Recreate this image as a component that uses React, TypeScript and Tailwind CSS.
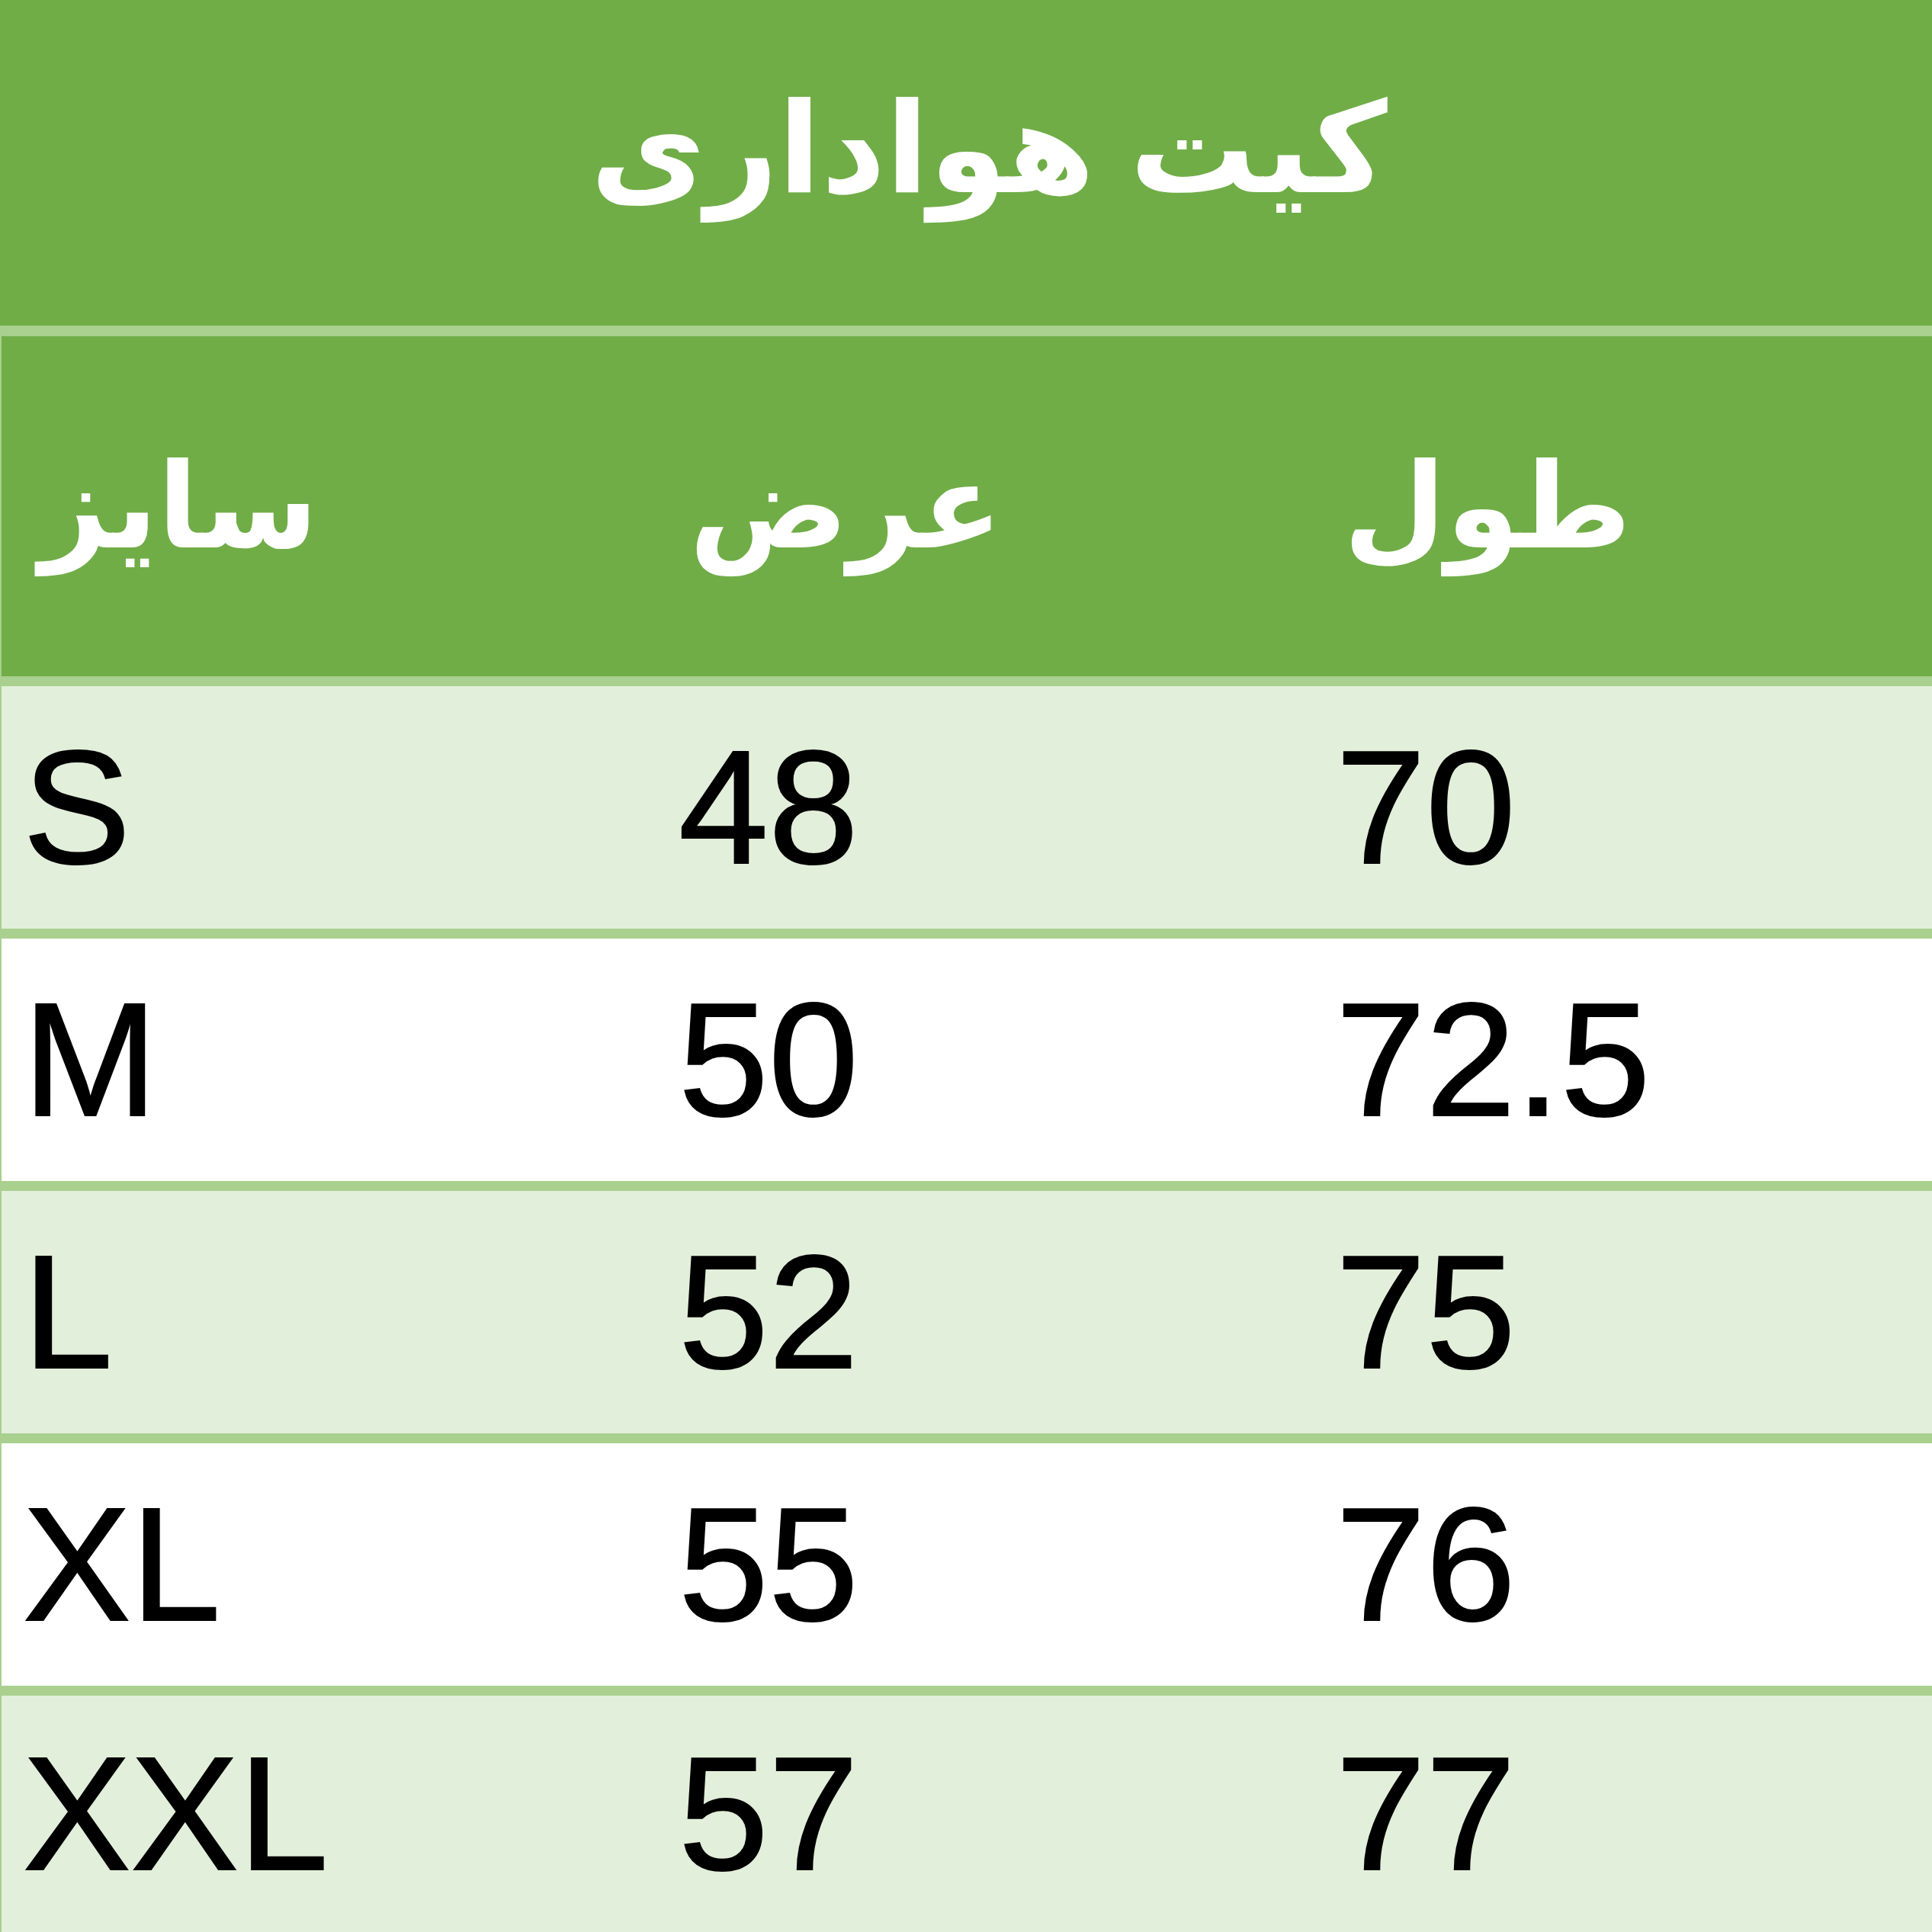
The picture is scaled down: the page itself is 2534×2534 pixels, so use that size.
import React from "react";

const rows = [
    { size: "S", width: "48", length: "70" },
    { size: "M", width: "50", length: "72.5" },
    { size: "L", width: "52", length: "75" },
    { size: "XL", width: "55", length: "76" },
    { size: "XXL", width: "57", length: "77" },
];

// فونت عربی برای عنوان‌ها
const AR = "font-['Liberation_Sans','DejaVu_Sans',sans-serif] font-bold";

export default function App(): React.ReactElement {
    return (
        <div className="w-[2534px] h-[2534px] overflow-hidden bg-white font-['Liberation_Sans',sans-serif]">
            {/* title */}
            <div className="h-[441px] bg-[#70ad47] border-b-[14px] border-[#a9d08e] flex items-center justify-center pl-[60px] pb-[36px]">
                <h1 dir="rtl" className={`${AR} text-white text-[165px] leading-none`}>
                    کیت هواداری
                </h1>
            </div>

            {/* header */}
            <div className={`${AR} h-[459px] bg-[#70ad47] border-b-[13px] border-l-2 border-[#a9d08e] grid grid-cols-[860px_862px_1fr] items-center px-[28px] text-white text-[155px] leading-none`}>
                <div>
                    <span dir="rtl" className="pl-[22px]">سایز</span>
                </div>
                <div>
                    <span dir="rtl" className="pl-[14px]">عرض</span>
                </div>
                <div>
                    <span dir="rtl" className="pl-[10px]">طول</span>
                </div>
            </div>

            {/* rows */}
            {rows.map((row, i) => (
                <div
                    key={row.size}
                    className={`${i % 2 === 0 ? "bg-[#e2efda]" : "bg-white"} ${
                        i < rows.length - 1 ? "h-[331px] border-b-[13px]" : "h-[310px]"
                    } border-l-2 border-[#a9d08e] grid grid-cols-[860px_862px_1fr] items-center px-[28px] text-black text-[212px] leading-none [-webkit-text-stroke:2px_black]`}
                >
                    <div>{row.size}</div>
                    <div>{row.width}</div>
                    <div>{row.length}</div>
                </div>
            ))}
        </div>
    );
}
